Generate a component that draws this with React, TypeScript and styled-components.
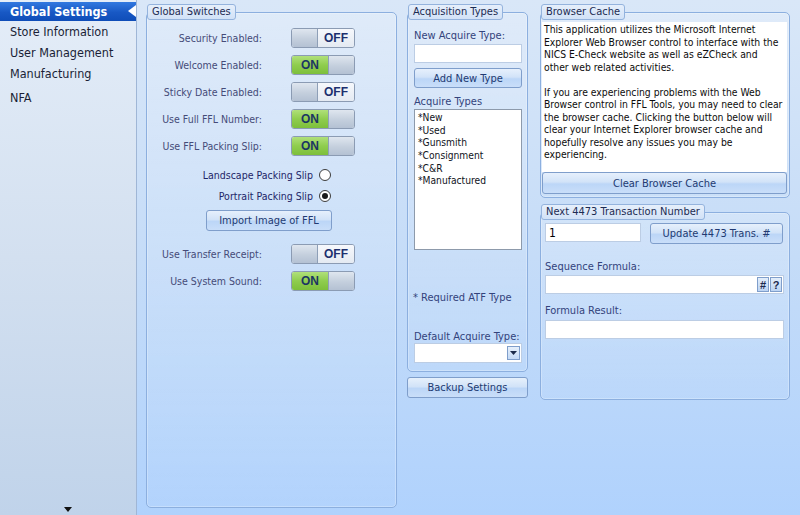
import React from 'react'
import styled, { createGlobalStyle } from 'styled-components'

const Global = createGlobalStyle`
  html, body {
    margin: 0;
    padding: 0;
  }
  body {
    font-family: "DejaVu Sans Condensed", "Liberation Sans", sans-serif;
    font-size: 11px;
  }
`

const switchesTop = [
  { label: 'Security Enabled:', on: false },
  { label: 'Welcome Enabled:', on: true },
  { label: 'Sticky Date Enabled:', on: false },
  { label: 'Use Full FFL Number:', on: true },
  { label: 'Use FFL Packing Slip:', on: true },
]

const switchesBottom = [
  { label: 'Use Transfer Receipt:', on: false },
  { label: 'Use System Sound:', on: true },
]

const acquireTypes = ['*New', '*Used', '*Gunsmith', '*Consignment', '*C&R', '*Manufactured']

const navItems = ['Global Settings', 'Store Information', 'User Management', 'Manufacturing', 'NFA']

const Toggle = ({ on }: { on: boolean }) => (
  <ToggleFrame>
    {on ? (
      <>
        <ToggleText $on>ON</ToggleText>
        <Knob $side="right" />
      </>
    ) : (
      <>
        <Knob $side="left" />
        <ToggleText $on={false}>OFF</ToggleText>
      </>
    )}
  </ToggleFrame>
)

export default function App() {
  return (
    <>
      <Global />
      <Window>
        <Sidebar>
          {navItems.map((n, i) => (
            <NavItem key={n} $active={i === 0} $last={i === navItems.length - 1}>
              {n}
            </NavItem>
          ))}
          <ScrollArrow />
        </Sidebar>

        <Main>
          <Column $w={251}>
            <Group $fill>
              <Legend>Global Switches</Legend>
              <SwitchList $mt={8}>
                {switchesTop.map(s => (
                  <SwitchRow key={s.label}>
                    <SwitchLabel>{s.label}</SwitchLabel>
                    <Toggle on={s.on} />
                  </SwitchRow>
                ))}
              </SwitchList>
              <RadioList>
                <RadioRow>
                  <RadioLabel>Landscape Packing Slip</RadioLabel>
                  <Radio $checked={false} />
                </RadioRow>
                <RadioRow>
                  <RadioLabel>Portrait Packing Slip</RadioLabel>
                  <Radio $checked />
                </RadioRow>
              </RadioList>
              <ImportButton>Import Image of FFL</ImportButton>
              <SwitchList $mt={13}>
                {switchesBottom.map(s => (
                  <SwitchRow key={s.label}>
                    <SwitchLabel>{s.label}</SwitchLabel>
                    <Toggle on={s.on} />
                  </SwitchRow>
                ))}
              </SwitchList>
            </Group>
          </Column>

          <Column $w={121}>
            <Group>
              <Legend>Acquisition Types</Legend>
              <AcqBody>
                <FieldLabel $mt={9}>New Acquire Type:</FieldLabel>
                <TextInput $mt={2} $h={19} />
                <Button $mt={5} $h={20}>Add New Type</Button>
                <FieldLabel $mt={7}>Acquire Types</FieldLabel>
                <ListBox>
                  {acquireTypes.map(t => (
                    <ListItem key={t}>{t}</ListItem>
                  ))}
                </ListBox>
                <Note>* Required ATF Type</Note>
                <FieldLabel $mt={26}>Default Acquire Type:</FieldLabel>
                <Combo>
                  <ComboButton>
                    <svg width="7" height="4" viewBox="0 0 7 4">
                      <path d="M0 0h7L3.5 4z" fill="#1b2a4a" />
                    </svg>
                  </ComboButton>
                </Combo>
              </AcqBody>
            </Group>
            <Button $mt={5} $h={21}>Backup Settings</Button>
          </Column>

          <Column $w={250}>
            <Group>
              <Legend>Browser Cache</Legend>
              <CacheBody>
                <CacheText>
                  This application utilizes the Microsoft Internet<br />
                  Explorer Web Browser control to interface with the<br />
                  NICS E-Check website as well as eZCheck and<br />
                  other web related activities.<br />
                  <br />
                  If you are experiencing problems with the Web<br />
                  Browser control in FFL Tools, you may need to clear<br />
                  the browser cache. Clicking the button below will<br />
                  clear your Internet Explorer browser cache and<br />
                  hopefully resolve any issues you may be<br />
                  experiencing.
                </CacheText>
                <Button $mt={0} $h={22}>Clear Browser Cache</Button>
              </CacheBody>
            </Group>
            <Group $mt={6}>
              <Legend>Next 4473 Transaction Number</Legend>
              <TransBody>
                <TransRow>
                  <TextInput $mt={0} $h={19} $w={96}>1</TextInput>
                  <Button $mt={0} $h={21} $w={133}>Update 4473 Trans. #</Button>
                </TransRow>
                <FieldLabel $mt={16}>Sequence Formula:</FieldLabel>
                <TextInput $mt={2} $h={19}>
                  <MiniButtons>
                    <MiniButton>#</MiniButton>
                    <MiniButton>?</MiniButton>
                  </MiniButtons>
                </TextInput>
                <FieldLabel $mt={10}>Formula Result:</FieldLabel>
                <TextInput $mt={3} $h={19} />
              </TransBody>
            </Group>
          </Column>
        </Main>
      </Window>
    </>
  )
}

const Window = styled.div`
  display: flex;
  width: 800px;
  height: 515px;
  overflow: hidden;
`

const Sidebar = styled.nav`
  width: 137px;
  flex-shrink: 0;
  display: flex;
  flex-direction: column;
  padding-top: 2px;
  box-sizing: border-box;
  background: linear-gradient(180deg, #e4edf8 0%, #d3e0f0 50%, #c0d3ea 100%);
  border-right: 1px solid #9fb6d6;
`

const NavItem = styled.div<{ $active: boolean; $last: boolean }>`
  position: relative;
  height: ${p => (p.$active ? 19 : 21)}px;
  line-height: ${p => (p.$active ? 19 : 21)}px;
  margin-top: ${p => (p.$last ? 3 : 0)}px;
  padding-left: 10px;
  font-size: 12.5px;
  font-weight: ${p => (p.$active ? 'bold' : 'normal')};
  color: ${p => (p.$active ? '#ffffff' : '#1a1f36')};
  background: ${p => (p.$active ? 'linear-gradient(180deg, #3279e0 0%, #1858c4 55%, #0f4db8 100%)' : 'transparent')};
  white-space: nowrap;

  &::after {
    content: '';
    display: ${p => (p.$active ? 'block' : 'none')};
    position: absolute;
    right: 0;
    top: 3px;
    border-style: solid;
    border-width: 6.5px 8px 6.5px 0;
    border-color: transparent #ffffff transparent transparent;
  }
`

const ScrollArrow = styled.div`
  margin: auto 0 3px 64px;
  width: 0;
  height: 0;
  border-style: solid;
  border-width: 5px 4.5px 0 4.5px;
  border-color: #111 transparent transparent transparent;
`

const Main = styled.main`
  flex: 1;
  display: flex;
  align-items: flex-start;
  gap: 10px;
  padding: 4px 0 7px 9px;
  box-sizing: border-box;
  height: 100%;
  background: linear-gradient(180deg, #d9e7f8 0%, #c5dcf8 50%, #b0d2fd 100%);

  & > :nth-child(3) {
    margin-left: 2px;
  }
`

const Column = styled.div<{ $w: number }>`
  width: ${p => p.$w}px;
  flex-shrink: 0;
  display: flex;
  flex-direction: column;
  align-self: stretch;
`

const Group = styled.fieldset<{ $fill?: boolean; $mt?: number }>`
  margin: ${p => p.$mt ?? 0}px 0 0;
  padding: 0;
  min-width: 0;
  flex: ${p => (p.$fill ? 1 : 'none')};
  border: 1px solid #8cafdf;
  border-radius: 5px;
  background: linear-gradient(180deg, rgba(255, 255, 255, 0.18) 0%, rgba(255, 255, 255, 0.02) 100%);
  box-shadow: inset 0 0 0 1px rgba(255, 255, 255, 0.25);
`

const Legend = styled.legend`
  margin-left: 0;
  padding: 0 4px;
  height: 16px;
  box-sizing: border-box;
  line-height: 14px;
  font-size: 11px;
  color: #1c2b52;
  border: 1px solid #94b3dd;
  border-radius: 3px;
  background: linear-gradient(180deg, #e6effb 0%, #d2e2f7 100%);
`

const SwitchList = styled.div<{ $mt: number }>`
  display: flex;
  flex-direction: column;
  gap: 7px;
  margin-top: ${p => p.$mt}px;
`

const SwitchRow = styled.div`
  display: flex;
  align-items: center;
  height: 20px;
`

const SwitchLabel = styled.span`
  width: 115px;
  text-align: right;
  font-size: 10.5px;
  color: #454b78;
  white-space: nowrap;
`

const ToggleFrame = styled.div`
  display: flex;
  margin-left: 29px;
  width: 64px;
  height: 20px;
  box-sizing: border-box;
  border: 1px solid #8b9bb3;
  border-radius: 3px;
  overflow: hidden;
  background: #eef3f9;
`

const Knob = styled.div<{ $side: 'left' | 'right' }>`
  width: 26px;
  box-sizing: border-box;
  background: linear-gradient(180deg, #dfe6ef 0%, #c4cfdd 55%, #b4c1d3 100%);
  border-${p => (p.$side === 'left' ? 'right' : 'left')}: 1px solid #8e9fb7;
`

const ToggleText = styled.div<{ $on: boolean }>`
  flex: 1;
  display: flex;
  align-items: center;
  justify-content: center;
  font-family: "Liberation Sans", sans-serif;
  font-weight: bold;
  font-size: 12px;
  color: ${p => (p.$on ? '#1c3563' : '#1d2f6e')};
  background: ${p =>
    p.$on
      ? 'linear-gradient(180deg, #b0e07a 0%, #8fcd4e 50%, #7dbf3b 100%)'
      : 'linear-gradient(180deg, #f6f8fc 0%, #e4eaf2 100%)'};
`

const RadioList = styled.div`
  display: flex;
  flex-direction: column;
  gap: 5px;
  margin-top: 11px;
`

const RadioRow = styled.div`
  display: flex;
  align-items: center;
  height: 16px;
`

const RadioLabel = styled.span`
  width: 166px;
  text-align: right;
  font-size: 10.5px;
  color: #1e2668;
  white-space: nowrap;
`

const Radio = styled.span<{ $checked: boolean }>`
  margin-left: 6px;
  width: 12px;
  height: 12px;
  box-sizing: border-box;
  border-radius: 50%;
  border: 1px solid #3c3c3c;
  background: #ffffff;
  display: flex;
  align-items: center;
  justify-content: center;

  &::after {
    content: '';
    display: ${p => (p.$checked ? 'block' : 'none')};
    width: 6px;
    height: 6px;
    border-radius: 50%;
    background: #1a1a1a;
  }
`

const Button = styled.div<{ $mt: number; $h: number; $w?: number }>`
  margin-top: ${p => p.$mt}px;
  height: ${p => p.$h}px;
  width: ${p => (p.$w ? `${p.$w}px` : 'auto')};
  flex-shrink: 0;
  box-sizing: border-box;
  display: flex;
  align-items: center;
  justify-content: center;
  color: #223a72;
  font-size: 11px;
  border: 1px solid #7f9ecb;
  border-radius: 3px;
  background: linear-gradient(180deg, #e6f0fc 0%, #d2e3f8 45%, #bcd6f7 55%, #c9def9 100%);
  white-space: nowrap;
`

const ImportButton = styled(Button).attrs({ $mt: 6, $h: 21, $w: 126 })`
  margin-left: 59px;
`

const AcqBody = styled.div`
  display: flex;
  flex-direction: column;
  padding: 0 5px 8px 6px;
`

const FieldLabel = styled.div<{ $mt: number }>`
  margin-top: ${p => p.$mt}px;
  height: 13px;
  line-height: 13px;
  color: #33437c;
  white-space: nowrap;
`

const TextInput = styled.div<{ $mt: number; $h: number; $w?: number }>`
  margin-top: ${p => p.$mt}px;
  height: ${p => p.$h}px;
  width: ${p => (p.$w ? `${p.$w}px` : 'auto')};
  box-sizing: border-box;
  display: flex;
  align-items: center;
  padding-left: 3px;
  background: #ffffff;
  border: 1px solid #bccde4;
  color: #000;
  font-size: 12px;
`

const ListBox = styled.div`
  margin-top: 1px;
  height: 141px;
  box-sizing: border-box;
  padding: 2px 3px;
  background: #ffffff;
  border: 1px solid #8d9aab;
`

const ListItem = styled.div`
  height: 12.7px;
  line-height: 12.7px;
  font-size: 10.2px;
  color: #10131c;
  white-space: nowrap;
`

const Note = styled.div`
  margin: 41px 0 0 -1px;
  height: 13px;
  line-height: 13px;
  color: #33437c;
`

const Combo = styled.div`
  height: 20px;
  box-sizing: border-box;
  display: flex;
  justify-content: flex-end;
  padding: 2px 1px 2px 0;
  background: #ffffff;
  border: 1px solid #bccde4;
`

const ComboButton = styled.div`
  width: 13px;
  box-sizing: border-box;
  display: flex;
  align-items: center;
  justify-content: center;
  border: 1px solid #7f9ecb;
  background: linear-gradient(180deg, #e7f0fb 0%, #c4daf6 100%);
`

const CacheBody = styled.div`
  display: flex;
  flex-direction: column;
  padding: 2px 2px 3px 1px;
`

const CacheText = styled.div`
  height: 150px;
  box-sizing: border-box;
  padding: 1px 2px;
  background: #ffffff;
  color: #0c0c0c;
  font-size: 10.3px;
  line-height: 12.5px;
  white-space: nowrap;
  overflow: hidden;
`

const TransBody = styled.div`
  display: flex;
  flex-direction: column;
  padding: 3px 5px 60px 4px;
`

const TransRow = styled.div`
  display: flex;
  align-items: flex-start;
  gap: 9px;
`

const MiniButtons = styled.div`
  margin-left: auto;
  display: flex;
  gap: 1px;
  padding-right: 1px;
`

const MiniButton = styled.div`
  width: 12px;
  height: 15px;
  box-sizing: border-box;
  display: flex;
  align-items: center;
  justify-content: center;
  font-family: "Liberation Sans", sans-serif;
  font-size: 11px;
  font-weight: bold;
  color: #1c2a4e;
  border: 1px solid #7f9ecb;
  background: linear-gradient(180deg, #e3eefb 0%, #bcd4f3 100%);
`
